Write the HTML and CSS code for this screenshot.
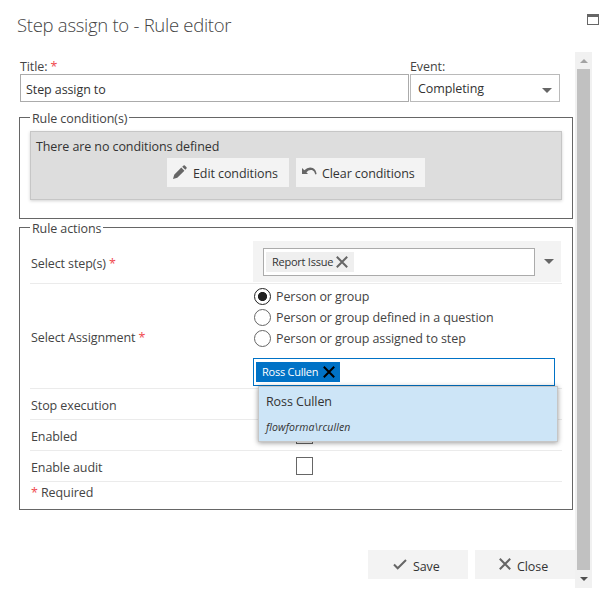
FILE: index.html
```html
<!DOCTYPE html>
<html lang="en">
<head>
<meta charset="utf-8">
<title>Rule editor</title>
<link rel="stylesheet" href="styles.css">
</head>
<body>
<header class="head">
  <h1 class="title">Step assign to - Rule editor</h1>
  <span class="maximize"></span>
</header>
<main class="main">
  <div class="content">
    <div class="fields">
      <div class="field name-field">
        <label class="label">Title: <span class="req">*</span></label>
        <div class="box">Step assign to</div>
      </div>
      <div class="field event-field">
        <label class="label">Event:</label>
        <div class="box select">Completing<span class="caret"></span></div>
      </div>
    </div>
    <fieldset class="group conditions">
      <legend>Rule condition(s)</legend>
      <div class="panel">
        <div class="panel-text">There are no conditions defined</div>
        <div class="panel-buttons">
          <button class="btn edit"><svg width="14" height="14" viewBox="0 0 14 14"><path d="M0 14 1.2 9.7 8.3 2.6 11.4 5.7 4.3 12.800z M9.200 1.700 10.600.4Q11.200 0 11.800.5L13.500 2.200Q14 2.800 13.500 3.400L12.300 4.800z"/></svg>Edit conditions</button>
          <button class="btn clear"><svg width="15" height="9" viewBox="0 0 15 9"><path d="M0 1 0 7 6 7 4.400 5.200Q7 2.300 10 3.100 12.600 4 13.300 7.500L14.600 7Q14 2.400 10.800 1 6.300-.7 2.300 3.200z"/></svg>Clear conditions</button>
        </div>
      </div>
    </fieldset>
    <fieldset class="group actions">
      <legend>Rule actions</legend>
      <div class="row steps">
        <div class="name">Select step(s) <span class="req">*</span></div>
        <div class="step-cell">
          <div class="step-box"><span class="chip">Report Issue<svg width="12" height="12" viewBox="0 0 12 12"><path d="M.8.8 11.200 11.200M11.200.8.8 11.200"/></svg></span></div>
          <span class="caret"></span>
        </div>
      </div>
      <div class="row assign">
        <div class="name">Select Assignment <span class="req">*</span></div>
        <div class="assign-cell">
          <div class="option"><span class="radio on"></span>Person or group</div>
          <div class="option"><span class="radio"></span>Person or group defined in a question</div>
          <div class="option"><span class="radio"></span>Person or group assigned to step</div>
          <div class="picker">
            <span class="chip person">Ross Cullen<svg width="12" height="12" viewBox="0 0 12 12"><path d="M.8.8 11.200 11.200M11.200.8.8 11.200"/></svg></span>
            <div class="menu"><div class="menu-name">Ross Cullen</div><div class="menu-login">flowforma\rcullen</div></div>
          </div>
        </div>
      </div>
      <div class="row flag"><div class="name">Stop execution</div><span class="check"></span></div>
      <div class="row flag"><div class="name">Enabled</div><span class="check"></span></div>
      <div class="row flag"><div class="name">Enable audit</div><span class="check"></span></div>
      <div class="required"><span class="req">*</span> Required</div>
    </fieldset>
    <div class="footer">
      <button class="btn save"><svg width="14" height="11" viewBox="0 0 14 11"><path class="stroke" d="M1 5.500 4.700 9.300 13 1"/></svg>Save</button>
      <button class="btn close"><svg width="12" height="12" viewBox="0 0 12 12"><path class="stroke" d="M.8.8 11.200 11.200M11.200.8.8 11.200"/></svg>Close</button>
    </div>
  </div>
  <div class="scrollbar"><span class="up"></span><span class="thumb"></span><span class="down"></span></div>
</main>
</body>
</html>
```
FILE: styles.css
```css
* { box-sizing: border-box; }
body {
  margin: 0;
  width: 609px;
  height: 593px;
  overflow: hidden;
  background: #fff;
  color: #444;
  font: 12.5px/17px "Open Sans", "Noto Sans", sans-serif;
  letter-spacing: -0.09px;
}
svg { flex: none; fill: #666; }
.req { color: #f0484e; }

.head { display: flex; justify-content: space-between; height: 52px; padding: 14px 10px 0 17px; }
.title { margin: -1px 0 0; font-size: 18.5px; line-height: 24px; font-weight: 300; letter-spacing: -0.28px; }
.maximize { width: 12px; height: 11px; border: 1px solid #666; border-top-width: 3px; }

.main { display: flex; height: 536px; }
.content { flex: none; width: 575px; padding: 6px 0 0 19px; }
.fields { display: flex; gap: 1px; padding-left: 1px; }
.label { display: block; height: 16px; line-height: 17px; }
.name-field { width: 389px; }
.event-field { width: 150px; }
.box { display: flex; align-items: center; height: 28px; border: 1px solid #ababab; padding: 2px 5px 0; color: #333; }
.select { justify-content: space-between; padding: 0 7px; border-color: #bababa; }
.caret { width: 0; height: 0; border: 5px solid transparent; border-top-color: #666; border-bottom: 0; }
.select .caret { margin-top: 4px; }

.group { width: 554px; margin: 0; padding: 0 10px; border: 1px solid #666; min-width: 0; }
legend { height: 17px; padding: 0 2px; line-height: 19px; }
.conditions { height: 110px; margin-top: 7px; }
.panel { margin-top: 5px; width: 532px; height: 69px; padding: 6px 5px 0; background: #ddd; border: 1px solid #c6c6c6; box-shadow: 0 1px 3px rgba(0,0,0,.18); color: #333; }
.panel-buttons { display: flex; gap: 7px; margin: 3px 0 0 131px; }
.btn { display: flex; align-items: center; height: 29px; border: 0; padding: 2px 0 0; background: #f3f3f3; color: #333; font: inherit; letter-spacing: inherit; white-space: nowrap; }
.edit { width: 122px; padding-left: 6px; gap: 6px; }
.edit svg { margin-top: -3px; }
.clear { width: 129px; padding-left: 6px; gap: 5px; }
.clear svg { margin-top: -5px; }

.actions { height: 291px; }
.row { display: flex; width: 532px; border-bottom: 1px solid #ebebeb; }
.name { width: 223px; flex: none; padding-left: 1px; }
.steps { height: 43px; margin-top: 5px; }
.steps .name { padding-top: 14px; }
.step-cell { display: flex; align-items: center; gap: 9px; width: 308px; height: 41px; padding: 0 0 0 10px; background: #f3f3f3; }
.step-box { width: 272px; height: 28px; padding: 3px 2px; border: 1px solid #ababab; background: #fff; }
.chip { display: flex; align-items: center; justify-content: space-between; width: 88px; height: 20px; padding: 0 6px; background: #efefef; color: #333; font-size: 11px; letter-spacing: -0.25px; white-space: nowrap; }
.chip svg { stroke: #666; stroke-width: 2; }
.assign { height: 105px; align-items: flex-start; }
.assign .name { padding-top: 45px; }
.assign-cell { padding-top: 2px; }
.option { display: flex; align-items: center; gap: 5px; height: 21px; padding-left: 1px; white-space: nowrap; }
.radio { width: 17px; height: 17px; border: 1px solid #666; border-radius: 50%; background: #fff; }
.radio.on { border-color: #222; background: radial-gradient(circle, #222 0 4.2px, #fff 4.9px); }
.picker { position: relative; width: 302px; height: 28px; margin-top: 9px; padding: 3px 2px; border: 1px solid #0072c6; background: #fff; }
.person { width: 84px; padding: 0 5px 0 6px; line-height: 15px; padding-bottom: 1px; background: #0072c6; color: #fff; }
.person svg { stroke: #000; }
.menu { position: absolute; z-index: 2; left: 4px; top: 27px; width: 300px; height: 56px; padding: 6px 7px; border: 1px solid #c6c6c6; background: #cde5f7; box-shadow: 0 1px 5px rgba(0,0,0,.4); color: #333; }
.menu-login { margin-top: 9px; font-size: 10.5px; font-style: italic; letter-spacing: 0.08px; }
.flag { height: 31px; }
.flag .name { width: 266px; padding-top: 8px; }
.check { width: 17px; height: 18px; margin-top: 6px; border: 1px solid #666; background: #fff; }
.required { padding: 2px 1px 0; }

.footer { display: flex; gap: 7px; margin: 40px 0 0 349px; }
.footer .btn { padding-top: 3px; }
.save { width: 100px; padding-left: 25px; gap: 6px; }
.close { width: 100px; padding-left: 24px; gap: 6px; }
.footer svg { margin-top: -4px; }
.stroke { fill: none; stroke: #666; stroke-width: 2; }

.scrollbar { display: flex; flex-direction: column; align-items: center; width: 17px; background: #f1f1f1; padding: 7px 0; }
.up { border: 4px solid transparent; border-bottom-color: #a3a3a3; border-top: 0; }
.thumb { width: 13px; height: 501px; margin: 6px 0 7px; background: #c1c1c1; }
.down { border: 4px solid transparent; border-top-color: #505050; border-bottom: 0; }
```
